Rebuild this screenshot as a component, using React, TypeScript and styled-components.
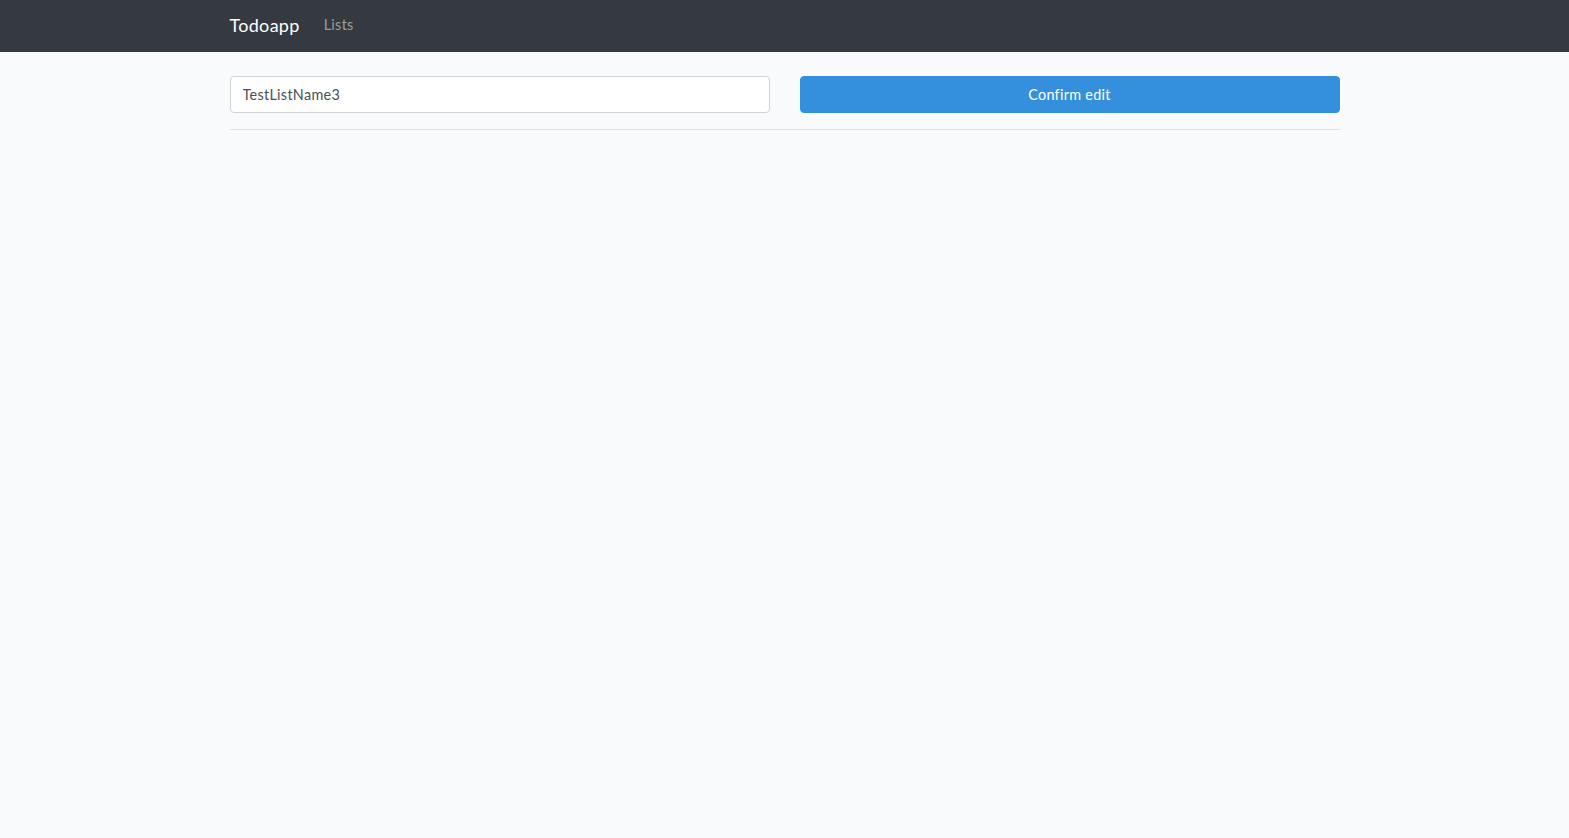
import React from "react";
import styled, { createGlobalStyle } from "styled-components";

const GlobalStyle = createGlobalStyle`
  *, *::before, *::after { box-sizing: border-box; }
  html, body { margin: 0; padding: 0; }
  body {
    background: #f8fafc;
    font-family: Lato, "Noto Sans", sans-serif;
    font-size: 14.4px;
    line-height: 1.6;
    letter-spacing: 0.3px;
    color: #212529;
  }
`;

const Navbar = styled.nav`
  background: #343a40;
  height: 52px;
  display: flex;
  align-items: center;
  padding-bottom: 2px;
`;

const Container = styled.div`
  width: 1140px;
  padding: 0 15px;
  margin: 0 auto;
  display: flex;
  align-items: center;
`;

const Brand = styled.a`
  color: #fff;
  font-size: 18px;
  line-height: 1.6;
  margin-right: 24px;
  text-decoration: none;
`;

const NavLink = styled.a`
  color: rgba(255, 255, 255, 0.5);
  font-size: 14.4px;
  text-decoration: none;
`;

const Main = styled.main`
  padding: 24px 0;
`;

const Content = styled.div`
  width: 1140px;
  padding: 0 15px;
  margin: 0 auto;
`;

const Row = styled.div`
  display: grid;
  grid-template-columns: 1fr 1fr;
  column-gap: 30px;
`;

const Input = styled.input`
  display: block;
  width: 100%;
  height: 37px;
  padding: 6px 12px;
  font-family: inherit;
  font-size: 14.4px;
  letter-spacing: 0.3px;
  color: #495057;
  background: #fff;
  border: 1px solid #ced4da;
  border-radius: 4px;
  outline: none;
`;

const Button = styled.button`
  display: block;
  width: 100%;
  height: 37px;
  font-family: inherit;
  font-size: 14.4px;
  letter-spacing: 0.3px;
  color: #fff;
  background: #3490dc;
  border: 1px solid #3490dc;
  border-radius: 4px;
  cursor: pointer;
`;

const Divider = styled.hr`
  margin: 16px 0 0;
  border: 0;
  border-top: 1px solid rgba(0, 0, 0, 0.1);
`;

export default function App() {
  return (
    <>
      <GlobalStyle />
      <Navbar>
        <Container>
          <Brand href="#">Todoapp</Brand>
          <NavLink href="#">Lists</NavLink>
        </Container>
      </Navbar>
      <Main>
        <Content>
          <Row>
            <Input defaultValue="TestListName3" />
            <Button>Confirm edit</Button>
          </Row>
          <Divider />
        </Content>
      </Main>
    </>
  );
}
